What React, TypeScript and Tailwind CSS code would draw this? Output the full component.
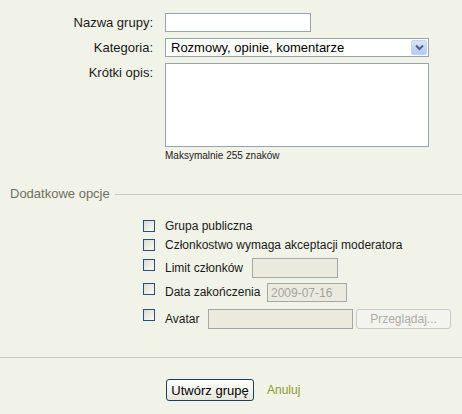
import { ReactNode } from "react";

const FONT = { fontFamily: '"Liberation Sans", Arial, sans-serif' };

// XP-style checkbox
function Check() {
  return (
    <span className="block w-[12px] h-[12px] shrink-0 border border-[#2a4f78] bg-gradient-to-br from-[#dcdcd6] to-[#fbfbf8]" />
  );
}

function OptionRow({
  label,
  labelWidth,
  top,
  children,
}: {
  label: string;
  labelWidth?: number;
  top: string;
  children?: ReactNode;
}) {
  return (
    <div className={`flex items-start pl-[143px] ${top}`}>
      <Check />
      <div className="flex items-center ml-[10px] min-h-[13px]">
        <span
          className="text-[12px] leading-[14px] text-[#1a1a1a] whitespace-nowrap -mt-[1px]"
          style={labelWidth ? { width: labelWidth } : undefined}
        >
          {label}
        </span>
        {children}
      </div>
    </div>
  );
}

function Chevron() {
  return (
    <svg width="9" height="7" viewBox="0 0 9 7">
      <path d="M1 1.5 L4.5 5 L8 1.5" fill="none" stroke="#4d6185" strokeWidth="2" />
    </svg>
  );
}

export default function App() {
  return (
    <div className="w-[462px] h-[414px] bg-[#f2f3e8] overflow-hidden" style={FONT}>
      {/* Main fields */}
      <div className="grid grid-cols-[153px_264px] gap-x-[12px] gap-y-[6px] pt-[13px] items-start">
        <label className="text-right text-[13px] leading-[15px] pt-[2px] text-[#1a1a1a]">
          Nazwa grupy:
        </label>
        <input className="w-[146px] h-[19px] bg-white border border-[#9aa4ae] outline-none" />

        <label className="text-right text-[13px] leading-[15px] pt-[2px] text-[#1a1a1a]">
          Kategoria:
        </label>
        <div className="flex items-center h-[19px] bg-white border border-[#9aa4ae]">
          <span className="flex-1 pl-[5px] text-[13px] leading-[15px] text-black whitespace-nowrap">
            Rozmowy, opinie, komentarze
          </span>
          <span className="flex items-center justify-center w-[16px] h-[15px] mr-[1px] rounded-[2px] bg-gradient-to-b from-[#dbe6fb] to-[#b3c8f3] border border-[#c4d3f2]">
            <Chevron />
          </span>
        </div>

        <label className="text-right text-[13px] leading-[15px] pt-[2px] text-[#1a1a1a]">
          Krótki opis:
        </label>
        <div>
          <textarea className="block w-[264px] h-[84px] bg-white border border-[#9aa4ae] outline-none resize-none" />
          <div className="text-[10px] leading-[12px] mt-[3px] text-[#1a1a1a]">
            Maksymalnie 255 znaków
          </div>
        </div>
      </div>

      {/* Fieldset legend */}
      <div className="flex items-center mt-[25px] pl-[10px]">
        <span className="text-[13px] leading-[14px] text-[#6f6f62]">Dodatkowe opcje</span>
        <span className="flex-1 h-px bg-[#c9cabd] ml-[5px]" />
      </div>

      <OptionRow label="Grupa publiczna" top="mt-[19px]" />
      <OptionRow label="Członkostwo wymaga akceptacji moderatora" top="mt-[6px]" />
      <OptionRow label="Limit członków" labelWidth={87} top="mt-[7px]">
        <span className="block w-[86px] h-[20px] bg-[#ebeadf] border border-[#a5a7a2] -mt-[1px]" />
      </OptionRow>
      <OptionRow label="Data zakończenia" labelWidth={102} top="mt-[5px]">
        <span className="flex items-center w-[80px] h-[19px] bg-[#ebeadf] border border-[#a5a7a2] pl-[3px] text-[12px] text-[#a3a3a0]">
          2009-07-16
        </span>
      </OptionRow>
      <OptionRow label="Avatar" labelWidth={43} top="mt-[7px]">
        <span className="block w-[145px] h-[20px] bg-[#ebeadf] border border-[#a5a7a2]" />
        <span className="flex items-center justify-center w-[95px] h-[20px] ml-[3px] rounded-[3px] border border-[#c9cac4] bg-[#f4f4ef] text-[12px] text-[#acaca6]">
          Przeglądaj...
        </span>
      </OptionRow>

      <div className="h-px bg-[#c9cabd] mt-[28px]" />

      {/* Actions */}
      <div className="flex items-center mt-[21px] pl-[166px]">
        <button className="w-[88px] h-[22px] rounded-[3px] border border-[#1f3d5c] bg-gradient-to-b from-white to-[#e7e6dd] text-[13px] leading-[15px] text-black">
          Utwórz grupę
        </button>
        <span className="ml-[13px] text-[12px] text-[#8a9a2e]">Anuluj</span>
      </div>
    </div>
  );
}
